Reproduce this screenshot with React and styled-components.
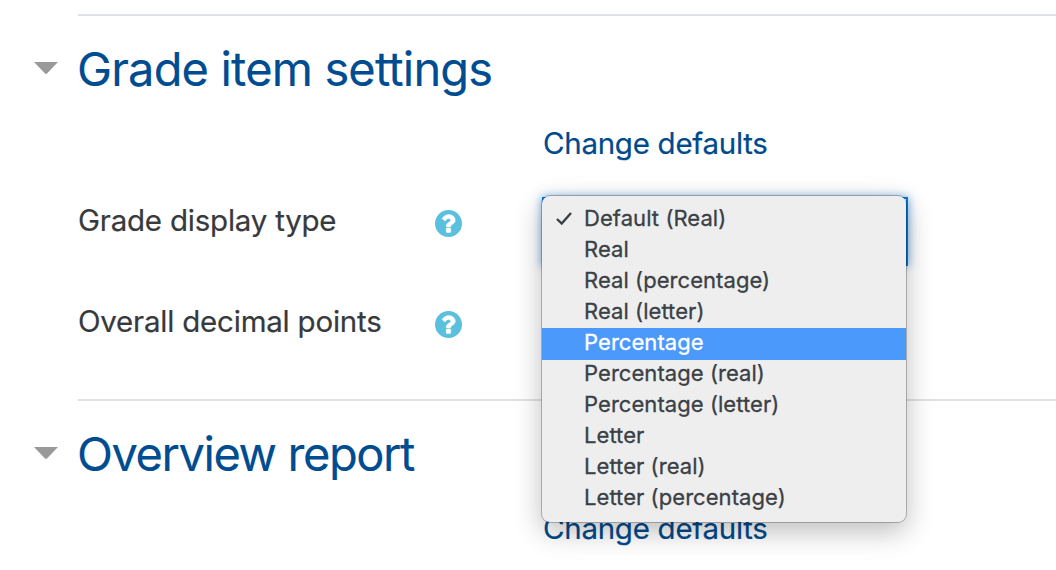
import React from 'react';
import styled, { createGlobalStyle } from 'styled-components';

const Global = createGlobalStyle`
  * { box-sizing: border-box; }
  body { margin: 0; background: #fff; overflow: hidden; font-family: Inter, Roboto, sans-serif; color: #373a3c; }
`;
const Page = styled.main`
  position: relative;
  width: 1056px;
  height: 570px;
  overflow: hidden;
  padding-top: 14px;
`;
const Section = styled.section`
  height: 385px;
  margin-left: 78px;
  border-top: 2px solid #dee2e6;
`;
const Heading = styled.div`
  display: flex;
  align-items: center;
  height: 106px;
  margin-left: -44px;
`;
const Caret = styled.svg`
  width: 24px;
  height: 12px;
  margin: 0 19px 2px 0;
  fill: #999;
`;
const Title = styled.h2`
  margin: 0;
  font: 400 47px/56px Inter, sans-serif;
  letter-spacing: ${p => p.$spacing};
  color: #004c91;
  -webkit-text-stroke: 0.15px #004c91;
  white-space: nowrap;
`;
const Defaults = styled.a`
  display: block;
  margin-left: 465px;
  height: 48px;
  font-size: 29.500px;
  line-height: 43px;
  letter-spacing: -0.28px;
  color: #004a8c;
  -webkit-text-stroke: 0.2px #004a8c;
  white-space: nowrap;
`;
const Field = styled.div`
  display: flex;
  align-items: center;
  height: 101px;
`;
const Label = styled.label`
  width: 357px;
  margin-bottom: 2px;
  font-size: 29.500px;
  line-height: 44px;
  letter-spacing: -0.22px;
  -webkit-text-stroke: 0.2px #373a3c;
  white-space: nowrap;
`;
const Help = styled.svg`
  width: 27px;
  height: 27px;
  margin-top: 5px;
`;
const Select = styled.div`
  position: absolute;
  left: 542px;
  top: 197px;
  width: 366px;
  height: 69px;
  border: 2px solid #0078e0;
  box-shadow: 0 0 9px #0070d299;
`;
const Menu = styled.ul`
  position: absolute;
  left: 542px;
  top: 196px;
  width: 364px;
  height: 326px;
  margin: 0;
  padding: 7px 0 0;
  list-style: none;
  border-radius: 8px;
  background: #eee;
  box-shadow: 0 0 0 1px #0000003d, 0 9px 28px #00000045;
`;
const Option = styled.li`
  display: flex;
  align-items: center;
  height: 31px;
  padding-left: 14px;
  font-size: 22px;
  line-height: 31px;
  letter-spacing: 0.06px;
  color: ${p => (p.$active ? '#fff' : '#3b4045')};
  -webkit-text-stroke: 0.3px currentColor;
  background: ${p => (p.$active ? '#4b99fb' : 'transparent')};
  white-space: nowrap;
  ${p => p.$active && 'height: 32px; margin-top: 1px; margin-bottom: -2px; padding-bottom: 3px;'}
`;
const Tick = styled.svg`
  width: 16px;
  height: 16px;
  margin: 0 12px 1px 0;
`;

const options = ['Default (Real)', 'Real', 'Real (percentage)', 'Real (letter)', 'Percentage', 'Percentage (real)', 'Percentage (letter)', 'Letter', 'Letter (real)', 'Letter (percentage)'];

function SectionTitle({ children, spacing }) {
  return <Heading><Caret viewBox="0 0 24 12"><path d="M0 0H24L13 11.5Q12 12.4 11 11.5Z" /></Caret><Title $spacing={spacing}>{children}</Title></Heading>;
}
function HelpIcon() {
  return <Help viewBox="0 0 1536 1536"><circle cx="768" cy="768" r="768" fill="#5bc0de" /><path d="M896 1248v-192q0-14-9-23t-23-9H672q-14 0-23 9t-9 23v192q0 14 9 23t23 9h192q14 0 23-9t9-23zM1152 576q0-88-55.500-163T958 297t-170-41q-243 0-371 213-15 24 8 42l132 100q7 6 19 6 16 0 25-12 53-68 86-92 34-24 86-24 48 0 85.500 26t37.500 59q0 38-20 61t-68 45q-63 28-115.500 86.500T640 892v36q0 14 9 23t23 9h192q14 0 23-9t9-23q0-19 21.500-49.500T972 829q32-18 49-28.500t46-35 44.500-48 28-60.500 12.500-81z" fill="#fff" stroke="#fff" strokeWidth="25" /></Help>;
}

export default function App() {
  return <><Global /><Page>
    <Section>
      <SectionTitle spacing="-0.84px">Grade item settings</SectionTitle>
      <Defaults>Change defaults</Defaults>
      <Field><Label>Grade display type</Label><HelpIcon /></Field>
      <Field><Label>Overall decimal points</Label><HelpIcon /></Field>
    </Section>
    <Section>
      <SectionTitle spacing="-1.43px">Overview report</SectionTitle>
      <Defaults>Change defaults</Defaults>
    </Section>
    <Select />
    <Menu>{options.map((name, i) => <Option key={name} $active={i === 4}>
      <Tick viewBox="0 0 16 16">{i === 0 && <path d="M1 9L5.700 13.500L15 3" fill="none" stroke="#3b4045" strokeWidth="2.4" />}</Tick>{name}
    </Option>)}</Menu>
  </Page></>;
}
